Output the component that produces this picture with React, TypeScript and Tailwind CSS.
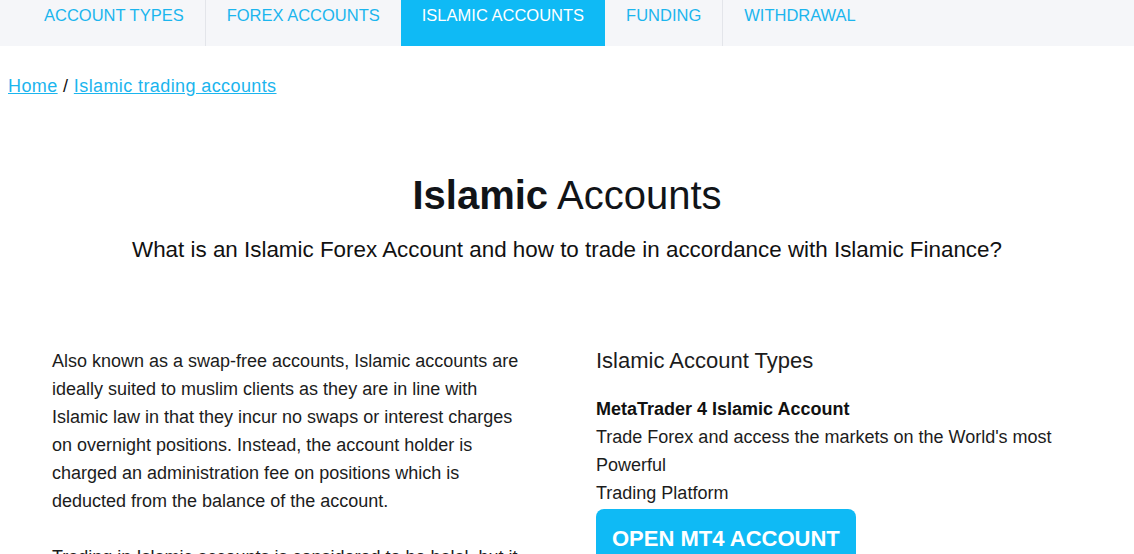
import React from 'react';

const tabs = [
  { label: 'ACCOUNT TYPES', active: false },
  { label: 'FOREX ACCOUNTS', active: false },
  { label: 'ISLAMIC ACCOUNTS', active: true },
  { label: 'FUNDING', active: false },
  { label: 'WITHDRAWAL', active: false },
];

export default function App() {
  return (
    <div className="min-h-screen bg-white text-[#1c1c1c] font-['Liberation_Sans',Arial,sans-serif]">
      {/* Sub navigation */}
      <nav className="h-[46px] bg-[#f5f6f9] pl-[23px] flex">
        {tabs.map((tab, i) => (
          <a
            key={tab.label}
            href="#"
            className={`h-full px-[21px] pt-[4px] text-[16.5px] leading-[22px] ${
              tab.active ? 'bg-[#0fbaf5] text-white' : 'text-[#1bb5ee]'
            } ${i < tabs.length - 1 && !tab.active && !tabs[i + 1].active ? 'border-r border-[#e3e5ea]' : ''}`}
          >
            {tab.label}
          </a>
        ))}
      </nav>

      {/* Breadcrumb */}
      <div className="px-[8px] pt-[28px] text-[18px] leading-[24px] tracking-[0.4px]">
        <a href="#" className="text-[#1bb5ee] underline">Home</a>
        <span className="text-[#111]"> / </span>
        <a href="#" className="text-[#1bb5ee] underline">Islamic trading accounts</a>
      </div>

      {/* Heading */}
      <header className="text-center pt-[73px]">
        <h1 className="text-[40px] leading-[48px] text-[#111418]">
          <span className="font-bold">Islamic</span> Accounts
        </h1>
        <p className="mt-[16px] text-[22.4px] leading-[30px] text-[#111]">
          What is an Islamic Forex Account and how to trade in accordance with Islamic Finance?
        </p>
      </header>

      {/* Content */}
      <section className="flex pl-[52px] pt-[82px]">
        <div className="w-[544px] shrink-0">
          <p className="w-[480px] text-[18px] leading-[28px]">
            Also known as a swap-free accounts, Islamic accounts are ideally suited to muslim clients as they are in line
            with Islamic law in that they incur no swaps or interest charges on overnight positions. Instead, the account
            holder is charged an administration fee on positions which is deducted from the balance of the account.
          </p>
          <p className="w-[480px] mt-[28px] text-[18px] leading-[28px]">
            Trading in Islamic accounts is considered to be halal, but it is still important to understand how the
            account works before you begin trading.
          </p>
        </div>
        <div className="w-[480px]">
          <h2 className="text-[22px] leading-[28px] text-[#1c1c1c]">Islamic Account Types</h2>
          <h3 className="mt-[20px] text-[18px] leading-[28px] font-bold text-[#111]">MetaTrader 4 Islamic Account</h3>
          <p className="text-[18px] leading-[28px]">
            Trade Forex and access the markets on the World's most Powerful
            <br />
            Trading Platform
          </p>
          <a
            href="#"
            className="mt-[2px] inline-block rounded-[8px] bg-[#0fbaf5] px-[16px] pt-[16px] pb-[14px] text-[22px] leading-[28px] font-bold text-white"
          >
            OPEN MT4 ACCOUNT
          </a>
        </div>
      </section>
    </div>
  );
}
